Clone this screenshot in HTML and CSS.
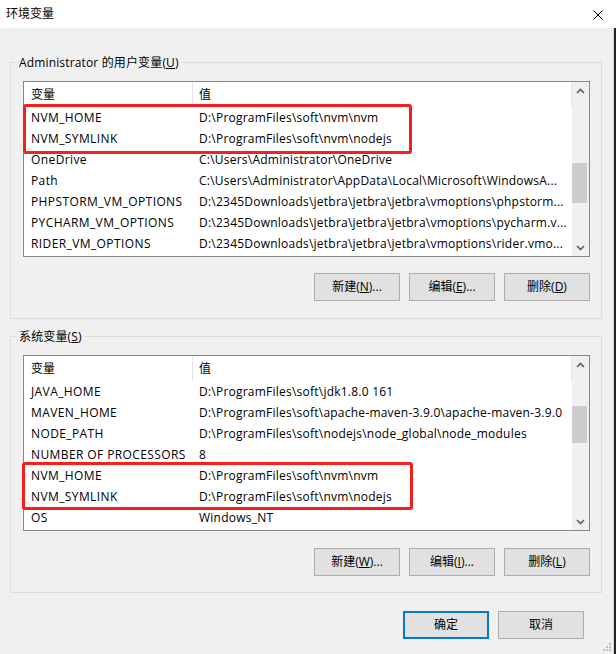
FILE: index.html
```html
<!DOCTYPE html>
<html lang="zh-CN">
<head>
<meta charset="utf-8">
<title>环境变量</title>
<link rel="stylesheet" href="styles.css">
</head>
<body>
<div class="dialog">
  <div class="titlebar">
    <span class="title">环境变量</span>
    <svg class="close" width="10" height="10" viewBox="0 0 10 10"><path d="M0.5 0.5L9.5 9.5M9.5 0.5L0.5 9.5" stroke="#000" stroke-width="1" fill="none"/></svg>
  </div>
  <div class="body">
    <section class="group group-user">
      <div class="group-label">Administrator 的用户变量(<u>U</u>)</div>
      <div class="listview">
        <div class="lv-main">
          <div class="lv-header"><div class="hcol c1">变量</div><div class="hcol c2">值</div></div>
          <div class="lv-rows">
            <div class="hl">
              <div class="row"><div class="cell c1">NVM_HOME</div><div class="cell c2">D:\ProgramFiles\soft\nvm\nvm</div></div>
              <div class="row"><div class="cell c1">NVM_SYMLINK</div><div class="cell c2">D:\ProgramFiles\soft\nvm\nodejs</div></div>
            </div>
            <div class="row"><div class="cell c1">OneDrive</div><div class="cell c2">C:\Users\Administrator\OneDrive</div></div>
            <div class="row"><div class="cell c1">Path</div><div class="cell c2">C:\Users\Administrator\AppData\Local\Microsoft\WindowsA...</div></div>
            <div class="row"><div class="cell c1">PHPSTORM_VM_OPTIONS</div><div class="cell c2">D:\2345Downloads\jetbra\jetbra\jetbra\vmoptions\phpstorm...</div></div>
            <div class="row"><div class="cell c1">PYCHARM_VM_OPTIONS</div><div class="cell c2">D:\2345Downloads\jetbra\jetbra\jetbra\vmoptions\pycharm.v...</div></div>
            <div class="row"><div class="cell c1">RIDER_VM_OPTIONS</div><div class="cell c2">D:\2345Downloads\jetbra\jetbra\jetbra\vmoptions\rider.vmo...</div></div>
          </div>
        </div>
        <div class="scrollbar">
          <div class="sb-arrow"><svg width="9" height="6" viewBox="0 0 9 6"><path d="M1 5L4.5 1.5L8 5" stroke="#606060" stroke-width="1.6" fill="none"/></svg></div>
          <div class="sb-track"><div class="sb-thumb" style="margin-top:64px;height:40px"></div></div>
          <div class="sb-arrow"><svg width="9" height="6" viewBox="0 0 9 6"><path d="M1 1L4.5 4.5L8 1" stroke="#606060" stroke-width="1.6" fill="none"/></svg></div>
        </div>
      </div>
      <div class="btn-row">
        <button class="btn">新建(<u>N</u>)...</button>
        <button class="btn">编辑(<u>E</u>)...</button>
        <button class="btn">删除(<u>D</u>)</button>
      </div>
    </section>

    <section class="group group-sys">
      <div class="group-label">系统变量(<u>S</u>)</div>
      <div class="listview">
        <div class="lv-main">
          <div class="lv-header"><div class="hcol c1">变量</div><div class="hcol c2">值</div></div>
          <div class="lv-rows">
            <div class="row"><div class="cell c1">JAVA_HOME</div><div class="cell c2">D:\ProgramFiles\soft\jdk1.8.0 161</div></div>
            <div class="row"><div class="cell c1">MAVEN_HOME</div><div class="cell c2">D:\ProgramFiles\soft\apache-maven-3.9.0\apache-maven-3.9.0</div></div>
            <div class="row"><div class="cell c1">NODE_PATH</div><div class="cell c2">D:\ProgramFiles\soft\nodejs\node_global\node_modules</div></div>
            <div class="row"><div class="cell c1">NUMBER OF PROCESSORS</div><div class="cell c2">8</div></div>
            <div class="hl hl-sys">
              <div class="row"><div class="cell c1">NVM_HOME</div><div class="cell c2">D:\ProgramFiles\soft\nvm\nvm</div></div>
              <div class="row"><div class="cell c1">NVM_SYMLINK</div><div class="cell c2">D:\ProgramFiles\soft\nvm\nodejs</div></div>
            </div>
            <div class="row"><div class="cell c1">OS</div><div class="cell c2">Windows_NT</div></div>
          </div>
        </div>
        <div class="scrollbar">
          <div class="sb-arrow"><svg width="9" height="6" viewBox="0 0 9 6"><path d="M1 5L4.5 1.5L8 5" stroke="#606060" stroke-width="1.6" fill="none"/></svg></div>
          <div class="sb-track"><div class="sb-thumb" style="margin-top:33px;height:37px"></div></div>
          <div class="sb-arrow"><svg width="9" height="6" viewBox="0 0 9 6"><path d="M1 1L4.5 4.5L8 1" stroke="#606060" stroke-width="1.6" fill="none"/></svg></div>
        </div>
      </div>
      <div class="btn-row">
        <button class="btn">新建(<u>W</u>)...</button>
        <button class="btn">编辑(<u>I</u>)...</button>
        <button class="btn">删除(<u>L</u>)</button>
      </div>
    </section>

    <div class="dialog-buttons">
      <button class="btn btn-default">确定</button>
      <button class="btn">取消</button>
    </div>
  </div>
  <svg class="grip" width="10" height="10" viewBox="0 0 10 10">
    <rect x="7" y="1" width="2" height="2" fill="#bfbfbf"/>
    <rect x="4" y="4" width="2" height="2" fill="#bfbfbf"/>
    <rect x="7" y="4" width="2" height="2" fill="#bfbfbf"/>
    <rect x="1" y="7" width="2" height="2" fill="#bfbfbf"/>
    <rect x="4" y="7" width="2" height="2" fill="#bfbfbf"/>
    <rect x="7" y="7" width="2" height="2" fill="#bfbfbf"/>
  </svg>
</div>
</body>
</html>
```

FILE: styles.css
```css
*, *::before, *::after { box-sizing: border-box; }

html, body {
  margin: 0;
  padding: 0;
}

body {
  width: 616px;
  height: 654px;
  overflow: hidden;
  background: #f0f0f0;
  color: #000;
  font-family: "Open Sans", "Noto Sans CJK SC", sans-serif;
  font-size: 12px;
}

.dialog {
  position: relative;
  width: 616px;
  height: 654px;
  display: flex;
  flex-direction: column;
}

.titlebar {
  height: 28px;
  flex: none;
  background: #fff;
  display: flex;
  align-items: center;
  justify-content: space-between;
  padding: 0 13px 0 6px;
}

.title {
  font-size: 12px;
  line-height: 16px;
}

.close {
  display: block;
  margin-top: 1px;
}

.body {
  flex: 1;
  display: flex;
  flex-direction: column;
  padding-left: 10px;
  border-right: 2px solid #252525;
  box-shadow: inset -1px 0 0 #d6d6d6;
}

.group {
  width: 592px;
  border: 1px solid #dcdcdc;
  padding: 0 11px 17px 12px;
}

.group-user {
  margin-top: 34px;
}

.group-sys {
  margin-top: 17px;
  padding-bottom: 16px;
}

.group-label {
  width: max-content;
  margin: -8px 0 0 -6px;
  padding: 0 2px;
  background: #f0f0f0;
  line-height: 16px;
  letter-spacing: 0.15px;
}

.listview {
  width: 567px;
  height: 176px;
  margin-top: 10px;
  border: 1px solid #828790;
  background: #fff;
  display: flex;
}

.lv-main {
  flex: 1;
  min-width: 0;
}

.lv-header {
  display: flex;
  height: 25px;
  line-height: 25px;
}

.hcol {
  border-right: 1px solid #e5e5e5;
}

.c1 {
  width: 169px;
  flex: none;
  padding-left: 7px;
}

.c2 {
  flex: 1;
  min-width: 0;
  padding-left: 6px;
}

.row {
  display: flex;
  height: 21px;
  line-height: 21px;
}

.cell {
  white-space: nowrap;
  overflow: hidden;
}

.cell.c1 {
  letter-spacing: 0.4px;
}

.cell.c2 {
  letter-spacing: 0.23px;
}

.hl {
  position: relative;
}

.hl::after {
  content: "";
  position: absolute;
  left: -1px;
  top: -3px;
  width: 389px;
  height: 50px;
  border: 3px solid #f5201e;
  border-radius: 3px;
  pointer-events: none;
}

.hl-sys::after {
  height: 48px;
  width: 391px;
  left: -2px;
}

.scrollbar {
  width: 17px;
  flex: none;
  background: #f0f0f0;
  display: flex;
  flex-direction: column;
}

.sb-arrow {
  height: 17px;
  flex: none;
  display: flex;
  align-items: center;
  justify-content: center;
}

.sb-arrow svg {
  display: block;
}

.sb-track {
  flex: 1;
}

.sb-thumb {
  width: 15px;
  background: #cdcdcd;
}

.btn-row {
  display: flex;
  justify-content: flex-end;
  gap: 9px;
  margin-top: 16px;
}

.group-sys .btn-row {
  margin-top: 17px;
}

.btn {
  width: 86px;
  height: 28px;
  padding: 0;
  margin: 0;
  border: 1px solid #adadad;
  background: #e1e1e1;
  color: #000;
  font-family: inherit;
  font-size: 12px;
  line-height: 16px;
}

.btn-default {
  border: 2px solid #0078d7;
}

.dialog-buttons {
  display: flex;
  justify-content: flex-end;
  gap: 9px;
  margin-top: 18px;
  padding-right: 30px;
}

.grip {
  position: absolute;
  right: 4px;
  bottom: 2px;
}
```
